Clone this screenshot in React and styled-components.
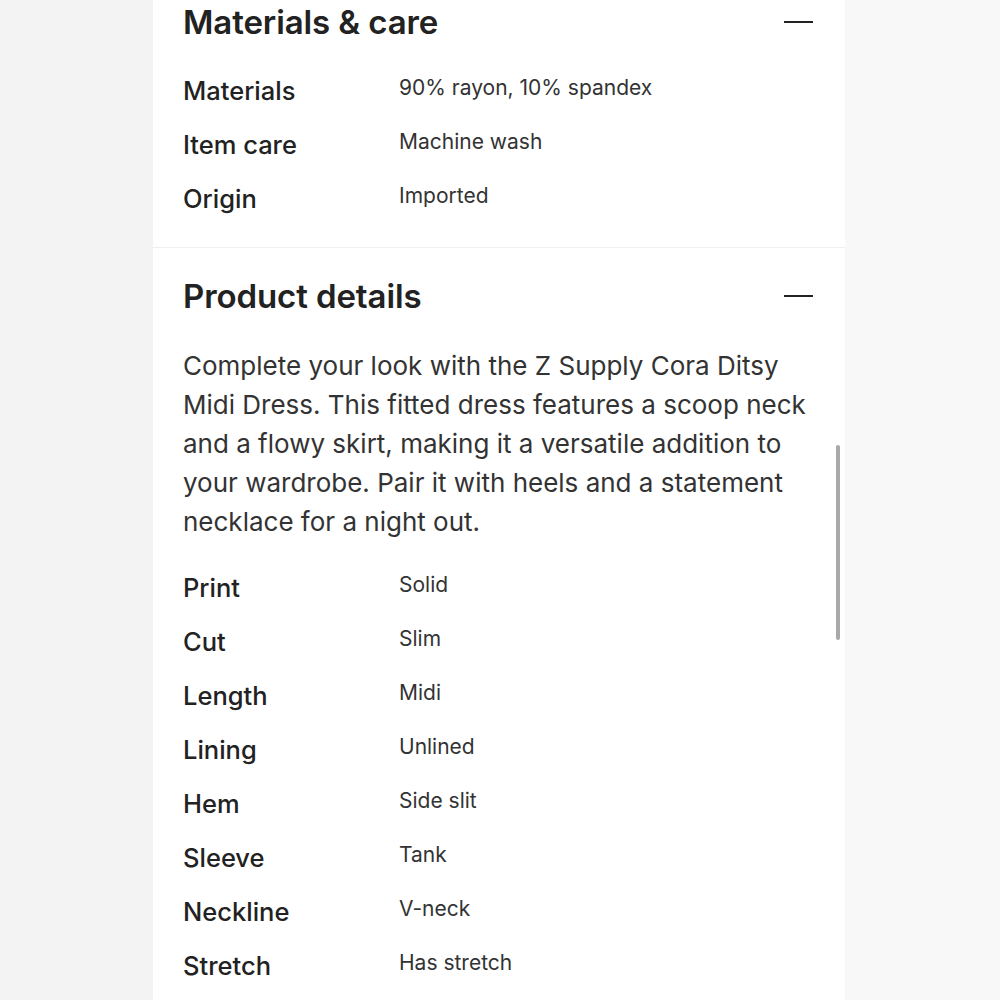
import React from 'react';
import styled, {createGlobalStyle} from 'styled-components';

const GlobalStyle = createGlobalStyle`
    html, body {
        margin:0;
        padding:0;
        background:#f5f5f5;
        font-family:Inter, "Noto Sans", sans-serif;
    }
`;

const Page = styled.div`
    height:1000px;
    overflow:hidden;
    display:flex;
    background:linear-gradient(to right, #f3f3f3 0, #f3f3f3 153px, #fff 153px, #fff 845px, #f8f8f8 845px);
`;

const Panel = styled.div`
    position:relative;
    margin-left:153px;
    width:692px;
    background:#fff;
`;

const Section = styled.section`
    padding:${props => props.top}px 32px ${props => props.bottom}px 30px;
    border-bottom:${props => props.divider ? '1px solid #efefef' : 'none'};
`;

const Header = styled.div`
    height:44px;
    display:flex;
    align-items:center;
    justify-content:space-between;
    margin-bottom:${props => props.gap}px;
`;

const Title = styled.h2`
    margin:0;
    font-size:33px;
    font-weight:600;
    color:#222;
    letter-spacing:-0.1px;
`;

const Collapse = styled.span`
    display:block;
    width:29px;
    height:2px;
    background:#222;
`;

const Row = styled.div`
    display:grid;
    grid-template-columns:216px 1fr;
    align-items:start;
    height:54px;
`;

const Label = styled.div`
    font-size:25.5px;
    font-weight:500;
    line-height:54px;
    color:#222;
`;

const Value = styled.div`
    font-size:21px;
    font-weight:400;
    line-height:48px;
    color:#333;
`;

const Description = styled.p`
    margin:0 0 20px;
    width:630px;
    font-size:26px;
    line-height:39px;
    color:#333;
`;

const Scrollbar = styled.div`
    position:absolute;
    left:683px;
    top:445px;
    width:4px;
    height:195px;
    border-radius:2px;
    background:#a9a9a9;
`;

const materials = [
    ['Materials', '90% rayon, 10% spandex'],
    ['Item care', 'Machine wash'],
    ['Origin', 'Imported'],
];

const details = [
    ['Print', 'Solid'],
    ['Cut', 'Slim'],
    ['Length', 'Midi'],
    ['Lining', 'Unlined'],
    ['Hem', 'Side slit'],
    ['Sleeve', 'Tank'],
    ['Neckline', 'V-neck'],
    ['Stretch', 'Has stretch'],
];

const Specs = ({rows}) => rows.map(([label, value]) => (
    <Row key={label}>
        <Label>{label}</Label>
        <Value>{value}</Value>
    </Row>
));

const App = () => {
    return (
        <>
            <GlobalStyle />
            <Page>
                <Panel>
                    <Section top={0} bottom={21} divider>
                        <Header gap={20}>
                            <Title>Materials &amp; care</Title>
                            <Collapse />
                        </Header>
                        <Specs rows={materials} />
                    </Section>
                    <Section top={26} bottom={0}>
                        <Header gap={28}>
                            <Title>Product details</Title>
                            <Collapse />
                        </Header>
                        <Description>
                            Complete your look with the Z Supply Cora Ditsy Midi Dress. This fitted dress features a scoop neck and a flowy skirt, making it a versatile addition to your wardrobe. Pair it with heels and a statement necklace for a night out.
                        </Description>
                        <Specs rows={details} />
                    </Section>
                    <Scrollbar />
                </Panel>
            </Page>
        </>
    );
};

export default App;
